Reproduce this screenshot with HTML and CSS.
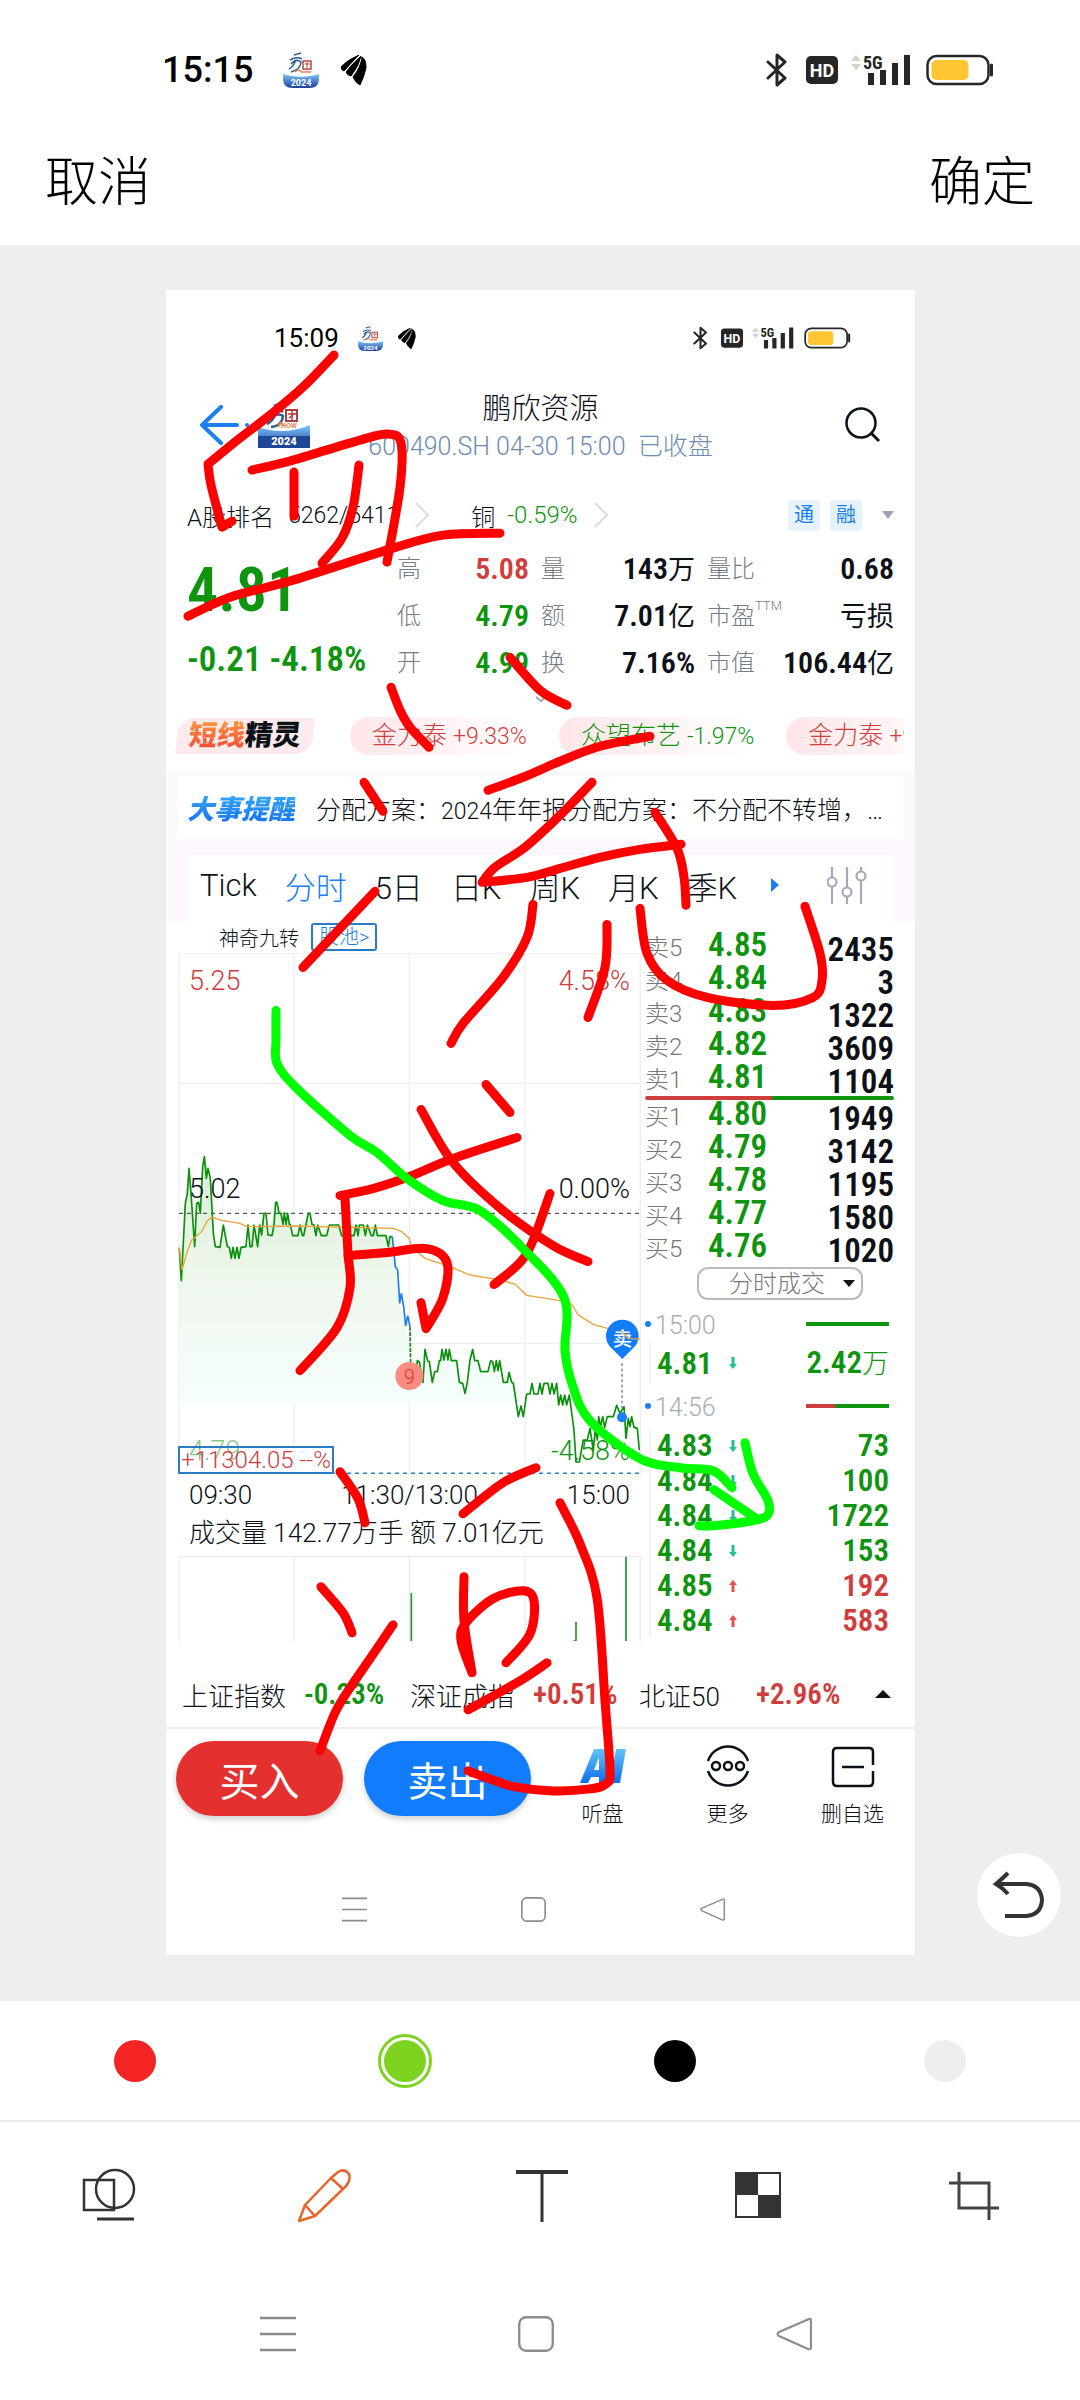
FILE: index.html
```html
<!DOCTYPE html>
<html lang="zh-CN">
<head>
<meta charset="utf-8">
<meta name="viewport" content="width=device-width, initial-scale=1">
<title>编辑图片</title>
<link rel="stylesheet" href="styles.css">
</head>
<body>
<svg class="defs" aria-hidden="true">
  <defs>
    <linearGradient id="sky" x1="0" y1="0" x2="0" y2="1"><stop offset="0" stop-color="#7fc4ff"/><stop offset="1" stop-color="#1a3f96"/></linearGradient>
    <linearGradient id="ai" x1="0" y1="0" x2="0" y2="1"><stop offset="0" stop-color="#62c4f8"/><stop offset="1" stop-color="#0f6cf2"/></linearGradient>
    <linearGradient id="area" x1="0" y1="0" x2="0" y2="1"><stop offset="0" stop-color="#d9eed6"/><stop offset=".5" stop-color="#eef7ec"/><stop offset="1" stop-color="#f6fefd"/></linearGradient>
    <symbol id="i-bt" viewBox="0 0 22 34"><path d="M2 9 L19 25 L11 32 V2 L19 9 L2 25" fill="none" stroke="#262626" stroke-width="3" stroke-linejoin="round" stroke-linecap="round"/></symbol>
    <symbol id="i-hd" viewBox="0 0 32 28"><rect width="32" height="28" rx="5" fill="#262626"/><text x="16" y="21" text-anchor="middle" class="hd-text">HD</text></symbol>
    <symbol id="i-signal" viewBox="0 0 60 34"><path d="M0 8 L5 2 L10 8Z M0 11 H10 L5 17Z" fill="#d2d2d2"/><text x="12" y="16" class="net-text">5G</text><path d="M17 20h6v12h-6z M29 17h6v15h-6z M41 10h6v22h-6z M53 2h6v30h-6z" fill="#262626"/></symbol>
    <symbol id="i-battery" viewBox="0 0 68 32"><rect x="1.5" y="2" width="61" height="28" rx="9" fill="#fff" stroke="#262626" stroke-width="2.5"/><rect x="5.5" y="6" width="37" height="20" rx="5" fill="#ffc532"/><path d="M65.500 11v10" stroke="#262626" stroke-width="3" stroke-linecap="round"/></symbol>
    <symbol id="i-bird" viewBox="0 0 26 30"><path d="M0 12 Q6 5 18 0 Q10 8 3 16 Q0 15 0 12Z M5 17 Q12 8 20 1 Q18 11 10 21 Q6 20 5 17Z M12 22 Q20 12 21 2 Q25 4 25 13 Q23 22 19 30 Q14 27 12 22Z" fill="#000" stroke="#000"/></symbol>
    <symbol id="i-show" viewBox="0 0 36 36"><path d="M11 3 L18 1 M7 8 Q14 4 19 7 M8 12 Q13 6 18 10 Q17 18 8 20 M13 8 Q10 15 6 17" fill="none" stroke="#2c5f94" stroke-width="1.500"/><rect x="20" y="9" width="8" height="8" fill="none" stroke="#b24a45" stroke-width="1.500"/><path d="M22 12h5M24 10v6" stroke="#b24a45"/><path d="M12 20q4-4 6 0 M18 20h10" stroke="#e0855a" stroke-width="1.500" fill="none"/><path d="M0 22 Q18 28 36 22 V27 Q36 36 26 36 H10 Q0 36 0 27Z" fill="url(#sky)"/><text x="18" y="34" text-anchor="middle" class="year-text">2024</text></symbol>
    <symbol id="i-menu" viewBox="0 0 36 36"><path d="M0 2h36M0 18h36M0 34h36" stroke="#8c8c8c" stroke-width="2.500"/></symbol>
    <symbol id="i-home" viewBox="0 0 36 36"><rect x="1.200" y="1.200" width="33.600" height="33.600" rx="7" fill="none" stroke="#8c8c8c" stroke-width="2.400"/></symbol>
    <symbol id="i-back" viewBox="0 0 36 36"><path d="M33 3 Q35 2 35 5 V31 Q35 34 32 33 L3 20 Q0 18 3 16Z" fill="none" stroke="#8c8c8c" stroke-width="2.200" stroke-linejoin="round"/></symbol>
    <symbol id="i-next" viewBox="0 0 14 26"><path d="M1 1 L13 13 L1 25" fill="none" stroke="#dcdae3" stroke-width="2"/></symbol>
    <symbol id="i-down" viewBox="0 0 8 12"><path d="M2.500 0h3v7H8L4 12 0 7h2.500z" fill="#27be92"/></symbol>
    <symbol id="i-up" viewBox="0 0 8 12"><path d="M2.500 12h3V5H8L4 0 0 5h2.500z" fill="#e3524e"/></symbol>
  </defs>
</svg>

<div class="page">
  <header class="topbar">
    <div class="status">
      <span class="status-time">15:15</span>
      <svg class="s-show"><use href="#i-show"/></svg>
      <svg class="s-bird"><use href="#i-bird"/></svg>
      <svg class="s-bt"><use href="#i-bt"/></svg>
      <svg class="s-hd"><use href="#i-hd"/></svg>
      <svg class="s-signal"><use href="#i-signal"/></svg>
      <svg class="s-battery"><use href="#i-battery"/></svg>
    </div>
    <div class="topbar-actions">
      <button type="button">取消</button>
      <button type="button">确定</button>
    </div>
  </header>

  <main class="stage">
    <article class="shot">
      <div class="status status-small">
        <span class="status-time">15:09</span>
        <svg class="s-show"><use href="#i-show"/></svg>
        <svg class="s-bird"><use href="#i-bird"/></svg>
        <svg class="s-bt"><use href="#i-bt"/></svg>
        <svg class="s-hd"><use href="#i-hd"/></svg>
        <svg class="s-signal"><use href="#i-signal"/></svg>
        <svg class="s-battery"><use href="#i-battery"/></svg>
      </div>

      <header class="stock-head">
        <div class="head-side">
          <button type="button" class="icon-btn" aria-label="返回"><svg width="50" height="40" viewBox="0 0 50 40"><path d="M21 2 L2 20 L21 38 M2 20 H37" fill="none" stroke="#1b7ff0" stroke-width="4" stroke-linecap="round" stroke-linejoin="round"/><circle cx="47" cy="20" r="2" fill="#1b7ff0"/></svg></button>
          <svg width="52" height="46" viewBox="0 0 52 46"><path d="M16 4 L24 1 M12 10 Q20 6 25 10 M12 16 Q20 10 25 14 Q24 24 13 25 M18 12 Q14 20 9 22" fill="none" stroke="#2c6296" stroke-width="2.500"/><path d="M20 25 q3-7 5-2" stroke="#e0855a" stroke-width="2" fill="none"/><rect x="28" y="8" width="11" height="11" fill="none" stroke="#a8413f" stroke-width="2"/><path d="M30 12h8M34 9v9M31 16l6-5" stroke="#a8413f" stroke-width="1.500"/><text x="23" y="26" class="how-text">HOW</text><path d="M0 25 Q26 34 52 23 V46 H0Z" fill="url(#sky)"/><rect y="34" width="52" height="12" fill="#1d4795"/><text x="26" y="43" text-anchor="middle" class="badge-year">2024</text></svg>
        </div>
        <div class="head-title">
          <h1>鹏欣资源</h1>
          <p><span class="n">600490.SH 04-30 15:00</span>&nbsp; 已收盘</p>
        </div>
        <div class="head-side head-end">
          <button type="button" class="icon-btn" aria-label="搜索"><svg width="36" height="36" viewBox="0 0 36 36"><circle cx="16" cy="16" r="14.500" fill="none" stroke="#0c1118" stroke-width="2.500"/><path d="M26 26 L34 34" stroke="#0c1118" stroke-width="3"/></svg></button>
        </div>
      </header>

      <div class="rank">
        <span class="rank-name">A股排名</span><span class="n rank-num">5262/5411</span>
        <svg class="next"><use href="#i-next"/></svg>
        <span class="rank-metal">铜</span><span class="n down rank-rate">-0.59%</span>
        <svg class="next"><use href="#i-next"/></svg>
        <span class="tags"><span class="tag">通</span><span class="tag">融</span><svg width="12" height="8" viewBox="0 0 12 8"><path d="M0 0h12L6 8z" fill="#9aa2b2"/></svg></span>
      </div>

      <section class="quote">
        <div class="quote-price down">
          <strong>4.81</strong>
          <span>-0.21 -4.18%</span>
        </div>
        <dl class="stats">
          <dt>高</dt><dd class="up">5.08</dd><dt>量</dt><dd>143<b>万</b></dd><dt>量比</dt><dd>0.68</dd>
          <dt>低</dt><dd class="down">4.79</dd><dt>额</dt><dd>7.01<b>亿</b></dd><dt>市盈<sup>TTM</sup></dt><dd><b>亏损</b></dd>
          <dt>开</dt><dd class="down">4.99</dd><dt>换</dt><dd>7.16%</dd><dt>市值</dt><dd>106.44<b>亿</b></dd>
        </dl>
      </section>
      <div class="expand"><svg width="12" height="8" viewBox="0 0 12 8"><path d="M1 2 L6 6 L11 2" fill="none" stroke="#a2a6b0" stroke-width="2"/></svg></div>

      <div class="ticker">
        <span class="spirit"><span><i>短线</i>精灵</span></span>
        <div class="pills">
          <a href="#a" class="up">金力泰 <span class="n">+9.33%</span></a>
          <a href="#b" class="down">众望布艺 <span class="n">-1.97%</span></a>
          <a href="#c" class="up">金力泰 <span class="n">+9.33%</span></a>
        </div>
      </div>

      <div class="band">
        <div class="notice"><span class="notice-label">大事提醒</span><p>分配方案：<span class="n">2024</span>年年报分配方案：不分配不转增，…</p></div>
        <nav class="tabs">
          <a href="#tick">Tick</a><a href="#min" class="on">分时</a><a href="#d5">5日</a><a href="#dk">日K</a><a href="#wk">周K</a><a href="#mk">月K</a><a href="#qk">季K</a>
          <svg class="more-k" width="8" height="14" viewBox="0 0 8 14"><path d="M0 0v14L8 7z" fill="#1b7ff0"/></svg>
          <button type="button" class="icon-btn tune" aria-label="设置"><svg width="40" height="38" viewBox="0 0 40 38"><g fill="none" stroke="#a3abb9" stroke-width="2.200"><path d="M5 1v10M5 21v17M20 1v20M20 31v7M34 1v4M34 14v24"/><circle cx="5" cy="16" r="4.500"/><circle cx="20" cy="26" r="4.500"/><circle cx="34" cy="10" r="4.500"/></g></svg></button>
        </nav>
      </div>

      <div class="market">
        <div class="chart-col">
          <div class="nine"><span>神奇九转</span><button type="button">股池&gt;</button></div>
          <div class="chart">
            <svg viewBox="54 -261 1389 1563" preserveAspectRatio="none" role="img" aria-label="分时走势">
              <path d="M57 1302V-261H1443M402-261V1302M748-261V1302M1095-261V1302M1441-261V1302M57 130H1443M57 910H1443" fill="none" stroke="#efeff3" stroke-width="4"/>
              <path class="area" d="M58 625 64 722 76 490 87 385 104 620 116 487 121 520 133 350 144 385 151 415 160 580 166 620 180 622 190 555 202 620 258 620 299 555 312 520 324 585 347 487 391 553 398 587 445 520 468 587 536 555 600 555 697 590 719 790 737 858 750 965 795 928 817 1027 846 928 890 960 915 1060 938 928 975 995 1030 970 1050 1000 1085 1085 H58Z" fill="url(#area)"/>
              <path d="M57 520H1443" stroke="#555" stroke-width="4" stroke-dasharray="12 12"/>
              <path d="M57 1300H1443" stroke="#2b7ac4" stroke-width="5" stroke-dasharray="12 12"/>
              <path d="M58 625 64 722 76 490 82 460 87 385 93 460 104 620 110 490 116 487 121 520 128 380 133 350 139 415 144 385 151 415 160 580 166 620 180 622 190 555 202 620 208 622 214 655 219 622 225 655 231 622 237 655 243 622 258 620 264 555 270 620 276 620 282 555 293 620 299 555 305 585 312 520 318 520 324 585 336 587 342 555 347 487 351 487 357 520 363 520 369 553 373 520 378 553 383 520 388 553 391 553 398 587 414 587 420 555 427 587 431 587 445 520 450 520 456 553 462 555 468 587 473 555 484 587 500 587 508 555 536 555 545 587 582 587 588 555 594 587 598 555 610 555 616 587 622 555 634 587 640 587 646 555 652 587 678 587 685 620 690 590 697 590" class="line-g"/>
              <path d="M697 590 706 680 713 690 719 790 724 760 731 800 737 858 743 827 750 860" fill="none" stroke="#1b7fe5" stroke-width="5"/>
              <path d="M750 860 752 970" class="line-g" stroke-dasharray="12 4"/>
              <path d="M768 1000 772 962 778 965 789 1027 795 928 803 962 808 965 817 1027 824 995 832 995 838 962 842 962 846 928 852 960 858 928 864 960 868 928 874 962 890 962 898 1027 908 1030 915 1060 922 1027 930 960 938 928 944 962 954 962 962 995 984 995 992 962 998 965 1003 995 1009 962 1014 992 1019 962 1030 1027 1042 1027 1047 997 1055 1027 1060 1030 1075 1130 1083 1098 1090 1130 1100 1062 1110 1062 1116 1030 1122 1062 1134 1062 1140 1030 1146 1062 1152 1030 1164 1030 1170 1062 1176 1030 1182 1062 1190 1030 1196 1095 1202 1065 1208 1095 1214 1065 1220 1095 1228 1065 1242 1170 1248 1266 1258 1266 1270 1200 1282 1200 1290 1165 1300 1232 1306 1165 1312 1200 1316 1130 1322 1160 1328 1130 1334 1162 1342 1130 1360 1130 1370 1096 1380 1120 1392 1100 1398 1195 1405 1135 1410 1160 1415 1130 1422 1162 1432 1165 1438 1230" class="line-g"/>
              <path d="M57 622 66 690 80 640 95 600 125 575 140 545 155 531 185 541 240 550 260 560 400 558 700 565 725 575 748 595 753 620 795 655 870 680 930 705 1010 718 1065 732 1100 766 1220 785 1235 793 1255 825 1300 853 1345 866" class="line-o"/>
              <path d="M1386 970V1105" stroke="#8b909c" stroke-width="5" stroke-dasharray="8 8"/>
              <circle cx="1386" cy="1132" r="15" fill="#1b7ff0"/>
              <circle cx="748" cy="1008" r="42" fill="#f98b82"/>
              <text x="748" y="1031" text-anchor="middle" class="nine-mark">9</text>
              <path d="M1387 957 L1355 925 A49 49 0 1 1 1419 925Z" fill="#127cff"/>
              <text x="1387" y="917" text-anchor="middle" class="sell-mark">卖</text>
              <path d="M1385 875 1405 895 1440 898" class="line-o"/>
            </svg>
            <span class="lab tl up">5.25</span><span class="lab tr up">4.58%</span>
            <span class="lab ml">5.02</span><span class="lab mr">0.00%</span>
            <span class="lab bl down">4.79</span><span class="lab br down">-4.58%</span>
            <span class="profit up">+11304.05 --%</span>
          </div>
          <div class="axis"><span>09:30</span><span>11:30/13:00</span><span>15:00</span></div>
          <p class="volume-text">成交量 <span class="n">142.77</span>万手 额 <span class="n">7.01</span>亿元</p>
          <svg class="volume" viewBox="54 348 1389 255" preserveAspectRatio="none" role="img" aria-label="成交量"><path d="M57 603V350H1443M402 350V603M748 350V603M1095 350V603M1441 350V603" fill="none" stroke="#ececf0" stroke-width="4"/><path d="M754 459V603M1248 545V603H1240M1398 350V603" fill="none" stroke="#259425" stroke-width="5"/></svg>
        </div>

        <div class="book-col">
          <table class="book">
            <tbody>
              <tr><th>卖5</th><td>4.85</td><td>2435</td></tr>
              <tr><th>卖4</th><td>4.84</td><td>3</td></tr>
              <tr><th>卖3</th><td>4.83</td><td>1322</td></tr>
              <tr><th>卖2</th><td>4.82</td><td>3609</td></tr>
              <tr><th>卖1</th><td>4.81</td><td>1104</td></tr>
            </tbody>
          </table>
          <div class="ratio"></div>
          <table class="book">
            <tbody>
              <tr><th>买1</th><td>4.80</td><td>1949</td></tr>
              <tr><th>买2</th><td>4.79</td><td>3142</td></tr>
              <tr><th>买3</th><td>4.78</td><td>1195</td></tr>
              <tr><th>买4</th><td>4.77</td><td>1580</td></tr>
              <tr><th>买5</th><td>4.76</td><td>1020</td></tr>
            </tbody>
          </table>
          <button type="button" class="deal-btn">分时成交<svg width="12" height="7" viewBox="0 0 12 7"><path d="M0 0h12L6 7z" fill="#0c1118"/></svg></button>
          <div class="deals">
            <div class="deal-time"><span>15:00</span><i></i></div>
            <div class="deal deal-tall"><span>4.81</span><svg><use href="#i-down"/></svg><span>2.42<b>万</b></span></div>
            <div class="deal-time deal-time-tall"><span>14:56</span><i class="mixed"></i></div>
            <div class="deal"><span>4.83</span><svg><use href="#i-down"/></svg><span>73</span></div>
            <div class="deal"><span>4.84</span><svg><use href="#i-down"/></svg><span>100</span></div>
            <div class="deal"><span>4.84</span><svg><use href="#i-down"/></svg><span>1722</span></div>
            <div class="deal"><span>4.84</span><svg><use href="#i-down"/></svg><span>153</span></div>
            <div class="deal"><span>4.85</span><svg><use href="#i-up"/></svg><span class="up">192</span></div>
            <div class="deal"><span>4.84</span><svg><use href="#i-up"/></svg><span class="up">583</span></div>
          </div>
        </div>
      </div>

      <div class="indices">
        <span>上证指数</span><b class="down">-0.23%</b>
        <span>深证成指</span><b class="up">+0.51%</b>
        <span>北证<span class="n">50</span></span><b class="up">+2.96%</b>
        <svg width="16" height="8" viewBox="0 0 16 8"><path d="M0 8h16L8 0z" fill="#0c1118"/></svg>
      </div>

      <div class="trade">
        <button type="button" class="pill-btn buy">买入</button>
        <button type="button" class="pill-btn sell">卖出</button>
        <div class="acts">
          <button type="button" class="act"><svg width="46" height="46" viewBox="0 0 46 46"><path d="M0 40 L14 6 H26 L28 40 H19 V34 H11 L8 40Z M14 27 H19 V14Z M36 6 H46 L40 40 H30Z" fill="url(#ai)" fill-rule="evenodd"/></svg>听盘</button>
          <button type="button" class="act"><svg width="46" height="46" viewBox="0 0 46 46"><g fill="none" stroke="#0c1118" stroke-width="2.500"><path d="M3 18 A21 21 0 0 1 43 18 M3 28 A21 21 0 0 0 43 28"/><circle cx="11" cy="23" r="4"/><circle cx="23" cy="23" r="4"/><circle cx="35" cy="23" r="4"/></g></svg>更多</button>
          <button type="button" class="act"><svg width="46" height="46" viewBox="0 0 46 46"><path d="M43 22 V9 Q43 5 39 5 H7 Q3 5 3 9 V39 Q3 43 7 43 H39 Q43 43 43 39 V28 M12 24 H34" fill="none" stroke="#0c1118" stroke-width="2.500"/></svg>删自选</button>
        </div>
      </div>

      <div class="sysnav sysnav-small"><svg><use href="#i-menu"/></svg><svg><use href="#i-home"/></svg><svg><use href="#i-back"/></svg></div>

      <svg class="ink" id="ink" viewBox="166 290 749 1664" preserveAspectRatio="none" aria-hidden="true"></svg>
    </article>
    <button type="button" class="undo" aria-label="撤销"><svg width="54" height="48" viewBox="0 0 54 48"><path d="M16 2 Q10 8 4 13 Q11 17 16 23 M4 13 H34 Q49 14 50 29 Q49 44 34 45 H13" fill="none" stroke="#333" stroke-width="4"/></svg></button>
  </main>

  <footer>
    <fieldset class="colors">
      <legend>颜色</legend>
      <label><input type="radio" name="color" class="c-red" aria-label="红色"></label>
      <label><input type="radio" name="color" class="c-green" aria-label="绿色" checked></label>
      <label><input type="radio" name="color" class="c-black" aria-label="黑色"></label>
      <label><input type="radio" name="color" class="c-gray" aria-label="灰色"></label>
    </fieldset>
    <div class="tools">
      <button type="button" aria-label="形状"><svg viewBox="0 0 56 56"><g fill="none" stroke="#333" stroke-width="2.500"><rect x="4" y="13" width="30" height="30"/><circle cx="35" cy="22" r="19"/><path d="M17 52h37" stroke-width="3"/></g></svg></button>
      <button type="button" aria-label="画笔"><svg viewBox="0 0 56 56"><path d="M3 54 L9 38 L35 11 L42 5 Q48 1 53 7 Q55 13 50 19 L47 22 L19 49Z M35 11 L47 22 M9 38 L19 49" fill="none" stroke="#e8652a" stroke-width="2.500" stroke-linejoin="round"/></svg></button>
      <button type="button" aria-label="文字"><svg viewBox="0 0 56 56"><path d="M4 5h52" stroke="#333" stroke-width="4"/><path d="M30 5v50" stroke="#333" stroke-width="3"/></svg></button>
      <button type="button" aria-label="马赛克"><svg viewBox="0 0 56 56"><rect x="8" y="6" width="44" height="44" fill="#fff" stroke="#333" stroke-width="2"/><path d="M8 6h22v22H8z M30 28h22v22H30z" fill="#333"/></svg></button>
      <button type="button" aria-label="裁剪"><svg viewBox="0 0 56 56"><path d="M15 5V41H55M5 16H45V53" fill="none" stroke="#444" stroke-width="3"/></svg></button>
    </div>
    <div class="sysnav"><svg><use href="#i-menu"/></svg><svg><use href="#i-home"/></svg><svg><use href="#i-back"/></svg></div>
  </footer>
</div>
<script src="ink.js"></script>
</body>
</html>
```
FILE: styles.css
```css
* { box-sizing: border-box; }
:root {
  --ui: Roboto, "Noto Sans CJK SC", sans-serif;
  --num: "Liberation Sans Narrow", "Roboto Condensed", Roboto, "Noto Sans CJK SC", sans-serif;
  --up: #d03d3d;
  --down: #0f9410;
  --ink: #0c1118;
}
body { margin: 0; background: #fff; color: var(--ink); font-family: var(--ui); font-weight: 300; }
button { border: 0; padding: 0; margin: 0; background: none; color: inherit; font: inherit; }
a { color: inherit; text-decoration: none; }
p, h1, dl, dd { margin: 0; }
svg { display: block; flex: none; }
.defs { position: absolute; width: 0; height: 0; }
.up { color: var(--up); }
.down { color: var(--down); }
.n { font-size: 23px; }

/* status bars */
.hd-text { font: 700 18px Roboto, sans-serif; fill: #fff; }
.net-text { font: 700 18px "Liberation Sans Narrow", "Roboto Condensed", Roboto, sans-serif; fill: #262626; }
.year-text { font: 700 9px Roboto, sans-serif; fill: #fff; }
.how-text { font: 700 7px Roboto, sans-serif; fill: #e0855a; }
.badge-year { font: 900 11px Roboto, sans-serif; fill: #fff; }
.status { display: flex; align-items: center; height: 116px; padding: 24px 86px 0 162px; }
.status-time { font-size: 36px; font-weight: 500; color: #000; }
.s-show { width: 36px; height: 36px; margin-left: 30px; }
.s-bird { width: 26px; height: 30px; margin-left: 22px; }
.s-bt { width: 22px; height: 34px; margin-left: auto; }
.s-hd { width: 32px; height: 28px; margin-left: 18px; }
.s-signal { width: 60px; height: 34px; margin-left: 13px; }
.s-battery { width: 68px; height: 32px; margin-left: 15px; }
.status-small { height: 96px; padding: 0 64px 0 108px; }
.status-small .status-time { font-size: 26px; font-weight: 400; }
.status-small .s-show { width: 25px; height: 25px; margin-left: 19px; }
.status-small .s-bird { width: 18px; height: 21px; margin-left: 15px; }
.status-small .s-bt { width: 15px; height: 24px; margin-left: auto; }
.status-small .s-hd { width: 22px; height: 20px; margin-left: 13px; }
.status-small .s-signal { width: 42px; height: 24px; margin-left: 9px; }
.status-small .s-battery { width: 47px; height: 22px; margin-left: 10px; }

.topbar-actions { display: flex; justify-content: space-between; align-items: center; height: 129px; padding: 0 45px 5px; font-size: 53px; color: #000; }

/* stage with the picture being edited */
.stage { position: relative; background: #eee; padding: 45px 165px 46px 166px; }
.shot { position: relative; background: #fff; }
.icon-btn { display: block; }
.stock-head { display: grid; grid-template-columns: 1fr auto 1fr; align-items: center; height: 84px; padding: 0 34px; }
.head-side { display: flex; align-items: center; gap: 8px; padding-bottom: 6px; }
.head-end { justify-content: flex-end; }
.head-title { text-align: center; line-height: 37px; }
.head-title h1 { font-size: 29px; font-weight: 300; }
.head-title p { font-size: 25px; color: #6d8cb0; white-space: nowrap; }
.head-title .n { font-size: 25px; }

.rank { display: flex; align-items: center; height: 76px; padding: 14px 21px 0; font-size: 24px; white-space: nowrap; }
.rank-num { margin-left: 14px; }
.rank-metal { margin-left: 42px; }
.rank-rate { margin-left: 12px; font-size: 24px; }
.next { width: 14px; height: 26px; margin-left: 16px; }
.tags { display: flex; align-items: center; gap: 10px; margin-left: auto; }
.tag { width: 32px; line-height: 31px; text-align: center; background: #e6f2fe; color: #1b7ff0; font-size: 20px; border-radius: 3px; font-weight: 400; }
.tags svg { margin-left: 10px; }

.quote { display: grid; grid-template-columns: 210px 1fr; padding: 0 21px; font-family: var(--num); }
.quote-price { display: flex; flex-direction: column; font-weight: 600; white-space: nowrap; }
.quote-price strong { font-size: 62px; line-height: 88px; font-weight: 600; }
.quote-price span { font-size: 35px; line-height: 52px; }
.stats { display: grid; grid-template-columns: 24px 108px 37px 129px 62px 1fr; line-height: 46px; }
.stats dt { font: 300 24px/46px var(--ui); color: #777c86; white-space: nowrap; }
.stats dt:nth-of-type(3n+2), .stats dt:nth-of-type(3n) { padding-left: 12px; }
.stats dd { text-align: right; font-size: 30px; font-weight: 600; line-height: 45px; white-space: nowrap; }
.stats b { font: 400 27px/45px var(--ui); }
.stats sup { position: absolute; font-size: 13px; line-height: 26px; }
.expand { display: flex; justify-content: center; align-items: center; height: 24px; }

.ticker { display: flex; align-items: center; gap: 37px; height: 50px; margin-bottom: 11px; padding: 0 11px; }
.spirit { flex: none; width: 136px; height: 36px; background: #fdeaec; border-radius: 16px 2px 16px 2px; transform: skewX(-6deg); font-weight: 900; font-size: 28px; line-height: 35px; text-align: center; }
.spirit i { font-style: normal; background: linear-gradient(#ff9a3d, #f04438); background-clip: text; color: transparent; }
.pills { display: flex; gap: 32px; overflow: hidden; white-space: nowrap; }
.pills a { flex: none; height: 38px; padding-left: 22px; border-radius: 19px; background: linear-gradient(90deg, #ffe6e8, #fff); font-size: 25px; line-height: 38px; }

.band { background: #fdf7fe; padding: 4px 11px 0; }
.notice { display: flex; align-items: center; height: 63px; padding: 0 10px; background: #fff; white-space: nowrap; font-size: 25px; }
.notice p { flex: 1; min-width: 0; margin-left: 21px; overflow: hidden; }
.notice-label { font-size: 27px; font-weight: 900; font-style: italic; background: linear-gradient(#3fb4fa, #0f6cf2); background-clip: text; color: transparent; }
.tabs { display: flex; align-items: center; gap: 28px; height: 66px; margin: 16px 11px 0; padding: 0 26px 6px 12px; background: #fff; font-size: 31px; white-space: nowrap; }
.tabs .on { color: #1b7ff0; }
.more-k { margin-left: 6px; }
.tune { margin-left: auto; }

.market { display: grid; grid-template-columns: minmax(0, 183fr) minmax(0, 100fr); padding: 0 21px 0 12px; }
.nine { display: flex; align-items: center; gap: 12px; height: 32px; padding-left: 41px; font-size: 20px; }
.nine button { height: 28px; padding: 0 6px; border: 2px solid #2b7ac4; border-radius: 3px; color: #1b7fd8; line-height: 24px; }
.chart { position: relative; height: 521px; }
.chart > svg { width: 100%; height: 100%; }
.line-g { fill: none; stroke: #0a900c; stroke-width: 5; stroke-linejoin: round; }
.line-o { fill: none; stroke: #e8a43a; stroke-width: 4; }
.nine-mark { font: 300 60px Roboto, sans-serif; fill: #e03434; }
.sell-mark { font: 500 58px "Noto Sans CJK SC", sans-serif; fill: #fff; }
.lab { position: absolute; font-size: 27px; line-height: 32px; }
.tl, .tr { top: 12px; }
.ml, .mr { top: 220px; }
.bl, .br { bottom: 7px; }
.tl, .ml, .bl { left: 11px; }
.tr, .mr, .br { right: 11px; }
.bl { opacity: .5; }
.profit { position: absolute; left: 0; bottom: 0; height: 28px; width: 156px; border: 2px solid #2b7ac4; font-size: 24px; line-height: 25px; text-align: center; white-space: nowrap; }
.axis { display: flex; justify-content: space-between; height: 42px; padding: 0 11px; font-size: 26px; line-height: 42px; }
.volume-text { height: 40px; padding-left: 11px; font-size: 26px; line-height: 34px; white-space: nowrap; }
.volume-text .n { font-size: 26px; }
.volume { width: 100%; height: 85px; }

.book-col { padding: 10px 0 0 4px; }
.book { width: 100%; border-collapse: collapse; font-family: var(--num); }
.book tr { height: 33px; }
.book th, .book td { padding: 0; line-height: 32px; }
.book th { width: 63px; text-align: left; font: 300 24px/32px var(--ui); color: #777; }
.book td { font-size: 33px; font-weight: 600; color: var(--down); line-height: 28px; vertical-align: top; }
.book td:last-child { text-align: right; color: var(--ink); vertical-align: bottom; }
.ratio { height: 4px; border-radius: 2px; background: linear-gradient(90deg, #d03d3d 51%, var(--down) 51%); }
.deal-btn { display: flex; align-items: center; justify-content: flex-end; gap: 18px; width: 166px; height: 33px; margin: 2px 0 0 52px; padding-right: 6px; border: 2px solid #bbb9bb; border-radius: 11px; font-size: 24px; line-height: 28px; color: #777; }
.deals { margin-top: 6px; padding: 0 5px 0 0; font-family: var(--num); color: var(--down); }
.deal-time { display: flex; align-items: center; justify-content: space-between; height: 36px; font: 300 25px var(--ui); color: #a6adba; }
.deal-time::before { content: ""; width: 6px; height: 6px; border-radius: 50%; background: #1b7ff0; }
.deal-time span { margin: 2px auto 0 4px; }
.deal-time i { width: 83px; height: 4px; background: var(--down); }
.deal-time i.mixed { background: linear-gradient(90deg, #d03d3d 35%, var(--down) 35%); }
.deal-time-tall { height: 44px; }
.deal { display: flex; align-items: center; height: 35px; margin-left: 4px; padding-left: 6px; border-left: 2px solid #f8f3f6; font-size: 31px; font-weight: 600; line-height: 35px; }
.deal-tall { height: 42px; }
.deal svg { width: 8px; height: 12px; margin-left: 16px; }
.deal span:last-child { margin-left: auto; }
.deal b { font: 300 27px/35px var(--ui); }

.indices { display: grid; grid-template-columns: 122px 106px 123px 106px 117px 1fr auto; align-items: center; height: 68px; margin-top: 20px; padding: 0 24px 0 16px; border-bottom: 2px solid #eee; font-size: 26px; white-space: nowrap; }
.indices b { font: 600 29px var(--num); }
.indices .n { font-size: 26px; }
.trade { display: flex; align-items: flex-start; gap: 21px; height: 134px; padding: 12px 0 0 10px; }
.pill-btn { width: 167px; height: 75px; border-radius: 38px; color: #fff; font-size: 40px; font-weight: 400; box-shadow: 0 3px 6px #0003; }
.buy { background: #e53030; }
.sell { background: #127cff; }
.acts { display: grid; grid-template-columns: repeat(3, 1fr); flex: 1; margin-left: -12px; }
.act { display: flex; flex-direction: column; align-items: center; gap: 8px; padding-top: 2px; font-size: 21px; }
.ink { position: absolute; inset: 0; width: 100%; height: 100%; }
.ink path { fill: none; stroke: #f00; stroke-width: 9; stroke-linecap: round; stroke-linejoin: round; }
.ink .green { stroke: #0f0; }
.undo { position: absolute; right: 19px; bottom: 64px; display: grid; place-items: center; width: 84px; height: 84px; border-radius: 50%; background: #fff; }

.sysnav { display: grid; grid-template-columns: repeat(3, 1fr); place-items: center; height: 134px; padding: 0 157px 0 149px; }
.sysnav svg { width: 36px; height: 36px; }
.sysnav-small { height: 92px; padding: 0 113px 0 99px; }
.sysnav-small svg { width: 25px; height: 25px; }

/* palette and tools */
.colors { display: grid; grid-template-columns: repeat(4, 1fr); place-items: center; height: 121px; margin: 0; padding: 0; border: 0; border-bottom: 2px solid #ececec; }
.colors legend { position: absolute; width: 1px; height: 1px; overflow: hidden; clip-path: inset(50%); }
.colors label { display: grid; }
.colors input { appearance: none; width: 42px; height: 42px; margin: 0; border-radius: 50%; }
.colors input:checked { outline: 3px solid #7ed321; outline-offset: 3px; }
.c-red { background: #f32424; }
.c-green { background: #7ed321; }
.c-black { background: #000; }
.c-gray { background: #eee; }
.tools { display: grid; grid-template-columns: repeat(5, 1fr); place-items: center; height: 145px; }
.tools svg { width: 56px; height: 56px; }
```
FILE: ink.js
```js
// Hand-drawn strokes, in the coordinates of the edited picture.
const strokes = [
  ["red", [334,355, 303,387, 270,415, 240,438, 208,464, 208,464, 211,485, 222,527, 222,527, 232,521]],
  ["red", [252,470, 293,460, 360,440, 388,434, 401,443, 400,487, 387,562]],
  ["red", [294,472, 294,516]],
  ["red", [359,465, 353,507, 342,538, 322,563]],
  ["red", [188,616, 230,597, 293,580, 393,548, 443,535, 500,533]],
  ["red", [391,687, 400,710, 410,727, 429,747]],
  ["red", [510,657, 540,690, 567,705]],
  ["red", [364,782, 383,811]],
  ["red", [488,790, 523,777, 560,761, 600,746, 650,736]],
  ["red", [592,782, 560,815, 525,847, 495,867, 482,882, 482,882, 527,877, 560,868, 600,857, 640,849, 681,844]],
  ["red", [655,812, 677,848, 684,877, 686,905]],
  ["red", [375,891, 303,967]],
  ["red", [533,904, 527,937, 503,977, 463,1023, 451,1043]],
  ["red", [607,924, 605,967, 588,1017]],
  ["red", [640,908, 647,953, 667,980, 707,997, 773,1005, 813,997, 822,980, 820,953, 805,906]],
  ["red", [486,1084, 510,1112]],
  ["red", [340,1195, 373,1188, 407,1177, 453,1158, 517,1137]],
  ["red", [421,1109, 453,1162, 503,1210, 553,1245, 588,1261]],
  ["red", [550,1193, 533,1240, 520,1262, 494,1284]],
  ["red", [345,1198, 348,1253, 350,1287, 337,1327, 300,1370]],
  ["red", [348,1255, 387,1252, 427,1248, 447,1262, 443,1297, 426,1328, 426,1328, 421,1302]],
  ["red", [340,1471, 358,1498, 365,1522]],
  ["red", [536,1467, 503,1482, 463,1513]],
  ["red", [321,1586, 343,1612, 352,1632]],
  ["red", [393,1624, 372,1655, 350,1687, 335,1712, 320,1750]],
  ["red", [464,1576, 464,1620, 472,1672, 472,1672, 461,1640, 466,1622, 493,1598, 523,1590, 534,1600, 530,1633, 506,1662]],
  ["red", [547,1662, 520,1680, 468,1709]],
  ["red", [560,1502, 580,1543, 597,1597, 605,1700, 610,1770, 606,1783, 590,1788, 553,1790, 515,1786, 490,1778, 468,1770]],
  ["green", [276,1010, 276,1040, 277,1063, 297,1088, 350,1135, 377,1152, 407,1178, 443,1200, 480,1210, 523,1248, 564,1297, 565,1350, 572,1383, 590,1420, 640,1458, 680,1467, 713,1470, 732,1487]],
  ["green", [714,1489, 755,1517]],
  ["green", [745,1442, 753,1473, 768,1500, 767,1515, 747,1521, 713,1525, 699,1525]]
];

// Catmull-Rom spline through the points; a repeated point gives a sharp corner.
function toPath(v) {
  const p = [];
  for (let i = 0; i < v.length; i += 2) p.push([v[i], v[i + 1]]);
  let d = `M${p[0]}`;
  for (let i = 0; i < p.length - 1; i++) {
    const a = p[i - 1] || p[i], b = p[i], c = p[i + 1], e = p[i + 2] || c;
    if (b[0] === c[0] && b[1] === c[1]) continue;
    d += `C${b[0] + (c[0] - a[0]) / 6} ${b[1] + (c[1] - a[1]) / 6} ${c[0] - (e[0] - b[0]) / 6} ${c[1] - (e[1] - b[1]) / 6} ${c}`;
  }
  return d;
}

const ink = document.getElementById("ink");
for (const [color, points] of strokes) {
  const path = document.createElementNS("http://www.w3.org/2000/svg", "path");
  path.setAttribute("d", toPath(points));
  path.setAttribute("class", color);
  ink.append(path);
}
```
